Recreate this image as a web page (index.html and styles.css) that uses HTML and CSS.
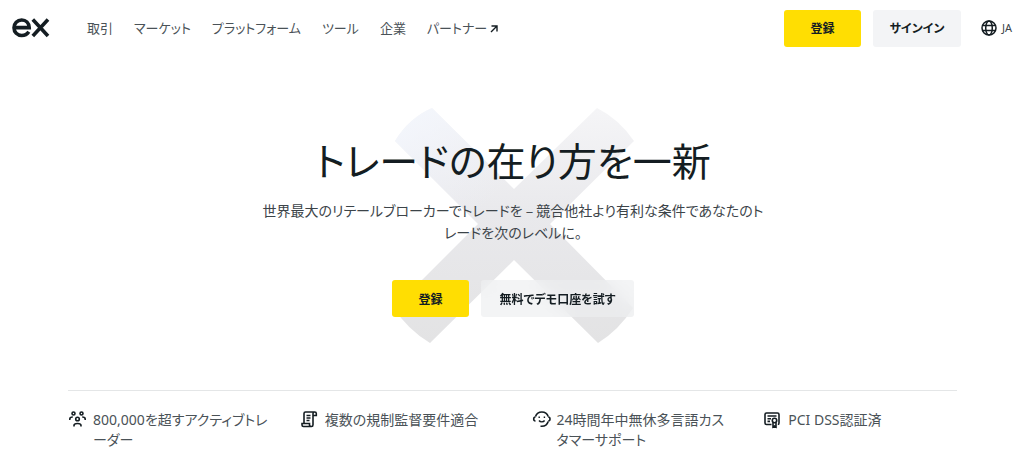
FILE: index.html
```html
<!DOCTYPE html>
<html lang="ja">
<head>
<meta charset="utf-8">
<meta name="viewport" content="width=device-width, initial-scale=1">
<title>ex</title>
<link rel="stylesheet" href="styles.css">
</head>
<body>
<header class="header">
  <a class="logo" href="#" aria-label="ex">
    <svg width="38" height="20" viewBox="0 0 38 20" fill="none" stroke="currentColor" stroke-width="3.6">
      <path d="M2 9.6H17.2C17 5 13.8 2 9.7 2C5.300 2 2 5.300 2 9.800C2 14.300 5.300 17.500 9.700 17.500C12.700 17.500 15.200 16.200 16.800 13.800"/>
      <path d="M20.800 1.500L36 18M36 1.500L20.800 18"/>
    </svg>
  </a>
  <nav class="nav">
    <a href="#">取引</a>
    <a href="#">マーケット</a>
    <a href="#">プラットフォーム</a>
    <a href="#">ツール</a>
    <a href="#">企業</a>
    <a href="#">パートナー
      <svg class="arrow" width="8" height="8" viewBox="0 0 8 8" fill="none" stroke="currentColor" stroke-width="1.400"><path d="M1.500 1H7V6.500M7 1L1 7"/></svg>
    </a>
  </nav>
  <div class="actions">
    <button class="button primary" type="button">登録</button>
    <button class="button secondary" type="button">サインイン</button>
    <button class="language" type="button">
      <svg width="16" height="16" viewBox="0 0 16 16" fill="none" stroke="currentColor" stroke-width="1.500"><circle cx="8" cy="8" r="7"/><ellipse cx="8" cy="8" rx="3.300" ry="7"/><path d="M1.600 5.500H14.400M1.600 10.500H14.400"/></svg>
      <span>JA</span>
    </button>
  </div>
</header>
<main>
  <section class="hero">
    <svg class="mark" width="242" height="236" viewBox="0 0 242 236" aria-hidden="true">
      <defs>
        <linearGradient id="shade" x1="0" y1="0" x2="0" y2="1"><stop offset="0" stop-color="#f5f5f7"/><stop offset=".45" stop-color="#e9e9ec"/><stop offset="1" stop-color="#e3e3e4"/></linearGradient>
        <linearGradient id="tint" x1="0" y1="0" x2=".4" y2=".4"><stop offset="0" stop-color="#f4f7fd"/><stop offset="1" stop-color="#edf0f8" stop-opacity="0"/></linearGradient>
        <path id="cross" d="M39 0L121 81L204 0Q226 11 241 33L157 116L240 200Q226 222 205 235L121 152L37 235Q14 221 1 200L85 116L2 33Q16 10 39 0Z"/>
      </defs>
      <use href="#cross" fill="url(#shade)"/>
      <use href="#cross" fill="url(#tint)"/>
    </svg>
    <h1 class="title">トレードの在り方を一新</h1>
    <p class="lead">世界最大のリテールブローカーでトレードを – 競合他社より有利な条件であなたのト<br>レードを次のレベルに。</p>
    <div class="buttons">
      <button class="button primary" type="button">登録</button>
      <button class="button secondary glass" type="button">無料でデモ口座を試す</button>
    </div>
  </section>
  <ul class="features">
    <li>
      <svg class="icon" width="20" height="20" viewBox="0 0 20 20" fill="none" stroke="currentColor" stroke-width="1.600"><circle cx="5.500" cy="3.500" r="1.500"/><circle cx="13.500" cy="3.500" r="1.500"/><circle cx="9.500" cy="9" r="1.800"/><path d="M1.800 10V9C1.800 7.700 2.800 7 4.800 7M17.200 10V9C17.200 7.700 16.200 7 14.200 7M6 16.500V15.500C6 14 7 13.500 9.500 13.500S13 14 13 15.500V16.500"/></svg>
      <span>800,000を超すアクティブトレ<br>ーダー</span>
    </li>
    <li>
      <svg class="icon" width="20" height="20" viewBox="0 0 20 20" fill="none" stroke="currentColor" stroke-width="1.600"><path d="M4 13V3.500C4 2.500 4.700 2 5.500 2H14.800C15.800 2 16.300 2.700 16.300 3.500V5.500H13M13 5.500V3.500C13 2.600 13.800 2 14.600 2M13 5.500V14.800C13 16 12.300 16.500 11.500 16.500H3.500C2.500 16.500 2 15.800 2 15V13.500H9.500V15C9.500 16 10.300 16.500 11.500 16.500M6.500 5.500H10.500M6.500 8H10.500M6.500 10.500H9.500"/></svg>
      <span>複数の規制監督要件適合</span>
    </li>
    <li>
      <svg class="icon" width="20" height="20" viewBox="0 0 20 20" fill="none" stroke="currentColor" stroke-width="1.600"><path d="M3.500 6.500C4.500 3.700 7 2 9.800 2C12.800 2 15.300 3.800 16.200 6.500M16.200 11.500C15.300 14.500 12.700 16.300 9.800 16.300H8.500"/><path d="M3.500 7C2.300 7 1.700 7.800 1.700 9S2.300 11 3.500 11M16.200 7C17.400 7 18 7.800 18 9S17.400 11 16.200 11"/><path d="M7 10.500C8.200 12.300 11.400 12.300 12.600 10.500M7.200 6.500V8M12.400 6.500V8" stroke-width="1.400"/></svg>
      <span>24時間年中無休多言語カス<br>タマーサポート</span>
    </li>
    <li>
      <svg class="icon" width="20" height="20" viewBox="0 0 20 20" fill="none" stroke="currentColor" stroke-width="1.600"><path d="M8.500 14.500H3.500C2.600 14.500 2 14 2 13V4.500C2 3.600 2.600 3 3.500 3H14.500C15.500 3 16 3.600 16 4.500V13C16 14 15.500 14.500 14.800 14.500M4.500 6H13.500M4.500 8.700H8M4.500 11.400H7"/><circle cx="11.500" cy="10.500" r="2.200"/><path d="M10 12.500V17L11.500 16L13 17V12.500"/></svg>
      <span>PCI DSS認証済</span>
    </li>
  </ul>
</main>
</body>
</html>
```
FILE: styles.css
```css
* { box-sizing: border-box; }

body {
  margin: 0;
  background: #fff;
  color: #141d22;
  font-family: "Noto Sans CJK JP", sans-serif;
  font-feature-settings: "palt";
  font-size: 14px;
  font-weight: 400;
  line-height: 20px;
}

a { color: inherit; text-decoration: none; }
button { font: inherit; font-feature-settings: inherit; color: inherit; border: 0; cursor: pointer; }
svg { display: block; flex: none; }

.header {
  display: flex;
  align-items: center;
  height: 56px;
  padding: 0 12px;
}

.nav {
  display: flex;
  flex: 1;
  gap: 21px;
  margin-left: 37px;
  white-space: nowrap;
  color: #4a5257;
  font-size: 13px;
}

.nav .arrow { display: inline-block; color: #141d22; }

.actions { display: flex; align-items: center; gap: 12px; }

.button {
  height: 37px;
  padding: 0 16px;
  border-radius: 3px;
  font-size: 12px;
  font-weight: 700;
  white-space: nowrap;
}

.primary { min-width: 77px; background: #ffde02; }
.secondary { min-width: 88px; background: #f3f4f6; }
.glass { min-width: 153px; background: rgba(236, 238, 240, .65); backdrop-filter: blur(8px); }

.language {
  display: flex;
  align-items: center;
  gap: 5px;
  margin-left: 8px;
  padding: 0;
  background: none;
  color: #3c4449;
  font-family: "Noto Sans", sans-serif;
  font-size: 11px;
}

.language svg { color: #141d22; }

.hero {
  display: flex;
  flex-direction: column;
  align-items: center;
  position: relative;
  padding: 75px 12px 73px 14px;
  text-align: center;
}

.mark { position: absolute; top: 52px; left: 50%; margin-left: -119px; }

.title {
  position: relative;
  margin: 0;
  font-size: 39px;
  font-weight: 400;
  line-height: 56px;
}

.lead {
  position: relative;
  margin: 12px 0 37px;
  color: #3c4449;
  font-size: 14px;
  line-height: 22px;
}

.buttons { display: flex; gap: 12px; position: relative; }

.features {
  display: grid;
  grid-template-columns: repeat(4, minmax(0, 1fr));
  column-gap: 38px;
  margin: 0 67px 0 68px;
  padding: 19px 0 12px;
  border-top: 1px solid #e4e6e7;
  list-style: none;
}

.features li {
  display: flex;
  gap: 5px;
  color: #4a5257;
  font-family: "Noto Sans", "Noto Sans CJK JP", sans-serif;
  white-space: nowrap;
}

.icon { color: #141d22; }
```
